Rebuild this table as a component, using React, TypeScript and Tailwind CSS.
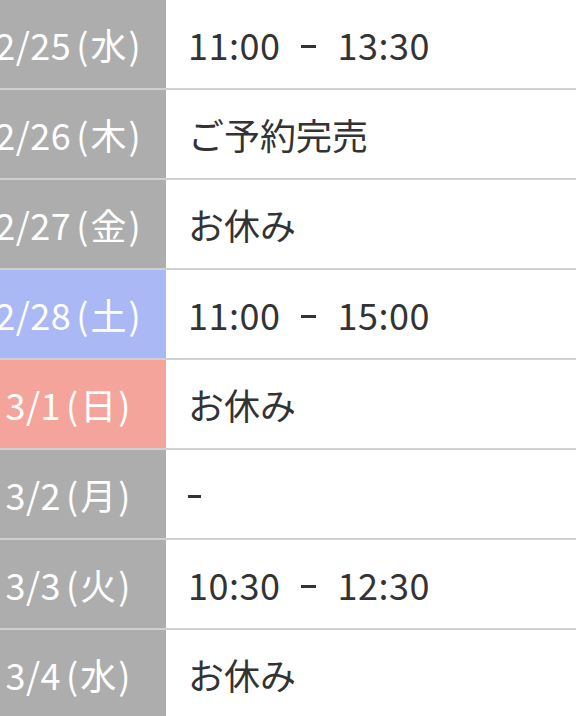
const rows = [
  { num: "2/25", day: "水", text: "11:00 - 13:30", tone: "gray" },
  { num: "2/26", day: "木", text: "ご予約完売", tone: "gray" },
  { num: "2/27", day: "金", text: "お休み", tone: "gray" },
  { num: "2/28", day: "土", text: "11:00 - 15:00", tone: "blue" },
  { num: "3/1", day: "日", text: "お休み", tone: "red" },
  { num: "3/2", day: "月", text: "-", tone: "gray" },
  { num: "3/3", day: "火", text: "10:30 - 12:30", tone: "gray" },
  { num: "3/4", day: "水", text: "お休み", tone: "gray" },
];

const toneClass: Record<string, string> = {
  gray: "bg-[#adadad]",
  blue: "bg-[#aab9f5]",
  red: "bg-[#f5a49c]",
};

function Hours({ text }: { text: string }) {
  if (text === "-") return <span className="w-[13px] h-[3px] bg-[#333333] mt-[4px]" />;
  const parts = text.split(" - ");
  if (parts.length < 2) return <span>{text}</span>;
  return (
    <span className="flex items-center">
      <span className="tracking-[0.5px]">{parts[0]}</span>
      <span className="mx-[21px] w-[15px] h-[3px] bg-[#333333] mt-[4px]" />
      <span className="tracking-[0.5px]">{parts[1]}</span>
    </span>
  );
}

export default function App() {
  return (
    <div
      className="w-[576px] h-[716px] overflow-hidden bg-white"
      style={{ fontFamily: '"Noto Sans CJK JP", "Noto Sans", sans-serif' }}
    >
      <div className="ml-[-30px]">
        {rows.map((r) => (
          <div key={r.num} className="flex h-[90px] border-b-2 border-[#d0d0d0]">
            <div
              className={`${toneClass[r.tone]} w-[196px] shrink-0 flex items-center justify-center text-white text-[36px] whitespace-nowrap`}
            >
              <span className="tracking-[0.5px]">{r.num}</span>
              <span className="ml-[5px]">(</span>
              <span className="mx-[2px]">{r.day}</span>
              <span>)</span>
            </div>
            <div className="flex items-center pl-[22px] text-[36px] text-[#333333] whitespace-nowrap">
              <Hours text={r.text} />
            </div>
          </div>
        ))}
      </div>
    </div>
  );
}
